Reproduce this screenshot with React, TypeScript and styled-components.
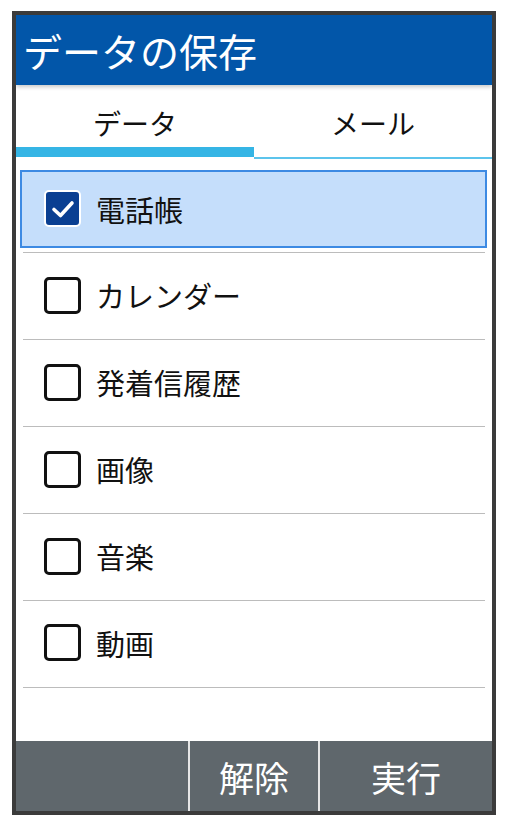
import styled, { createGlobalStyle } from "styled-components";

const GlobalStyle = createGlobalStyle`
  body {
    margin: 0;
    background: #ffffff;
    font-family: "Noto Sans CJK JP", "Noto Sans", sans-serif;
  }
`;

const Page = styled.div`
  padding: 11px 11px 0 12px;
`;

const Frame = styled.div`
  width: 484px;
  height: 804px;
  box-sizing: border-box;
  border: 4px solid #3b3b3b;
  display: flex;
  flex-direction: column;
  background: #ffffff;
  overflow: hidden;
`;

const Header = styled.header`
  height: 70px;
  flex-shrink: 0;
  background: #0256a9;
  color: #ffffff;
  font-size: 39px;
  line-height: 70px;
  padding-left: 7px;
  position: relative;
  z-index: 1;
  box-shadow: 0 2px 4px rgba(0, 0, 0, 0.22);
`;

const Tabs = styled.div`
  display: flex;
  height: 74px;
  flex-shrink: 0;
`;

const Tab = styled.div`
  flex: 1;
  display: flex;
  flex-direction: column;
`;

const TabLabel = styled.div`
  height: 48px;
  padding-top: 14px;
  display: flex;
  align-items: center;
  justify-content: center;
  font-size: 28px;
  color: #111111;
`;

const TabBar = styled.div<{ $active?: boolean }>`
  height: ${(p) => (p.$active ? 10 : 2)}px;
  margin-top: ${(p) => (p.$active ? 0 : 10)}px;
  margin-bottom: ${(p) => (p.$active ? 2 : 0)}px;
  background: ${(p) => (p.$active ? "#35b5e5" : "#5cc4ec")};
`;

const List = styled.div`
  flex: 1;
  padding-top: 7.5px;
`;

const Item = styled.div`
  margin: 0 7px;
  padding: 3px 0 5px;
  border-bottom: 1px solid #bcbcbc;
  height: 77.9px;
`;

const Row = styled.div<{ $selected?: boolean }>`
  height: 78px;
  box-sizing: border-box;
  margin: 0 -2px 0 -3px;
  display: flex;
  align-items: center;
  gap: 15px;
  padding-left: ${(p) => (p.$selected ? 22 : 24)}px;
  border: ${(p) => (p.$selected ? "2px solid #3d8ae3" : "none")};
  background: ${(p) => (p.$selected ? "#c5defb" : "transparent")};
`;

const Box = styled.span<{ $checked?: boolean }>`
  width: 37px;
  height: 37px;
  box-sizing: border-box;
  border-radius: 5px;
  flex-shrink: 0;
  display: flex;
  align-items: center;
  justify-content: center;
  border: ${(p) => (p.$checked ? "2px solid #ffffff" : "3.5px solid #111111")};
  background: ${(p) => (p.$checked ? "#0a3f92" : "#ffffff")};
`;

const ItemText = styled.span`
  font-size: 29px;
  color: #111111;
`;

const SoftKeys = styled.div`
  height: 70px;
  flex-shrink: 0;
  display: flex;
  background: #5f676c;
`;

const SoftKey = styled.div<{ $w: number; $divider?: boolean }>`
  width: ${(p) => p.$w}px;
  box-sizing: border-box;
  border-left: ${(p) => (p.$divider ? "2px solid #e6e6e6" : "none")};
  display: flex;
  align-items: center;
  justify-content: center;
  color: #ffffff;
  font-size: 35px;
`;

const items = ["電話帳", "カレンダー", "発着信履歴", "画像", "音楽", "動画"];

function Check() {
  return (
    <svg width="24" height="20" viewBox="0 0 24 20">
      <path
        d="M3 10.5 L9.5 16.5 L21 4"
        fill="none"
        stroke="#ffffff"
        strokeWidth="3.6"
        strokeLinecap="round"
        strokeLinejoin="round"
      />
    </svg>
  );
}

export default function App() {
  return (
    <Page>
      <GlobalStyle />
      <Frame>
        <Header>データの保存</Header>
        <Tabs>
          <Tab>
            <TabLabel>データ</TabLabel>
            <TabBar $active />
          </Tab>
          <Tab>
            <TabLabel>メール</TabLabel>
            <TabBar />
          </Tab>
        </Tabs>
        <List>
          {items.map((name, i) => (
            <Item key={name}>
              <Row $selected={i === 0}>
                <Box $checked={i === 0}>{i === 0 ? <Check /> : null}</Box>
                <ItemText>{name}</ItemText>
              </Row>
            </Item>
          ))}
        </List>
        <SoftKeys>
          <SoftKey $w={172} />
          <SoftKey $w={130} $divider>
            解除
          </SoftKey>
          <SoftKey $w={174} $divider>
            実行
          </SoftKey>
        </SoftKeys>
      </Frame>
    </Page>
  );
}
